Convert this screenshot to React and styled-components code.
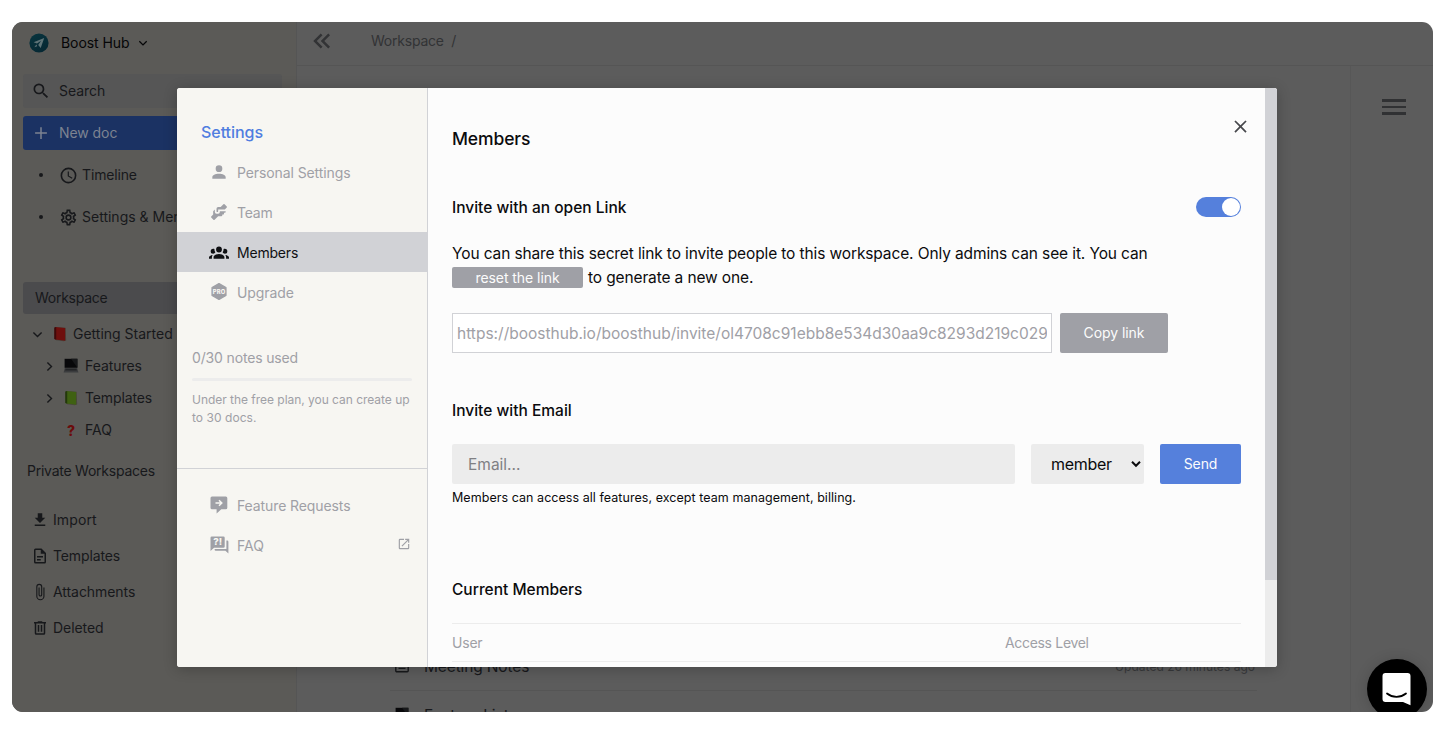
import React from 'react';
import styled, { createGlobalStyle } from 'styled-components';

const GlobalStyle = createGlobalStyle`
  * { box-sizing: border-box; }
  body { margin: 0; background: #fff; font-family: Inter, "Liberation Sans", sans-serif; }
  button, input { font-family: inherit; margin: 0; }
`;

const Page = styled.div`
  height: 734px;
  padding: 22px 12px;
`;

const Frame = styled.div`
  position: relative;
  display: flex;
  width: 1421px;
  height: 690px;
  border-radius: 11px;
  overflow: hidden;
  background: #5c5c5c;
`;

const Text = styled.span`
  padding-bottom: ${(p) => (p.$flat ? 0 : 2)}px;
  font-size: ${(p) => p.$size || 14}px;
  font-weight: ${(p) => p.$weight || 400};
  letter-spacing: ${(p) => (p.$track === undefined ? -0.06 : p.$track)}px;
  color: ${(p) => p.$color || 'inherit'};
  white-space: nowrap;
`;

const Svg = styled.svg`
  display: block;
  flex: none;
  fill: currentColor;
`;

const paths = {
  account: 'M12,4A4,4 0 0,1 16,8A4,4 0 0,1 12,12A4,4 0 0,1 8,8A4,4 0 0,1 12,4M12,14C16.42,14 20,15.79 20,18V20H4V18C4,15.79 7.58,14 12,14Z',
  handshake: 'M11 6H14L17.29 2.7A1 1 0 0 1 18.71 2.7L21.29 5.29A1 1 0 0 1 21.29 6.7L19 9H11V11A1 1 0 0 1 10 12A1 1 0 0 1 9 11V8A2 2 0 0 1 11 6M5 11V15L2.71 17.29A1 1 0 0 0 2.71 18.71L5.29 21.29A1 1 0 0 0 6.71 21.29L11 17H15A1 1 0 0 0 16 16V15H17A1 1 0 0 0 18 14V13H19A1 1 0 0 0 20 12V11H13V12A2 2 0 0 1 11 14H9A2 2 0 0 1 7 12V9Z',
  group: 'M12,5.5A3.5,3.5 0 0,1 15.5,9A3.5,3.5 0 0,1 12,12.5A3.5,3.5 0 0,1 8.5,9A3.5,3.5 0 0,1 12,5.5M5,8C5.56,8 6.08,8.15 6.53,8.42C6.38,9.85 6.8,11.27 7.66,12.38C7.16,13.34 6.16,14 5,14A3,3 0 0,1 2,11A3,3 0 0,1 5,8M19,8A3,3 0 0,1 22,11A3,3 0 0,1 19,14C17.84,14 16.84,13.34 16.34,12.38C17.2,11.27 17.62,9.85 17.47,8.42C17.92,8.15 18.44,8 19,8M5.5,18.25C5.5,16.18 8.41,14.5 12,14.5C15.59,14.5 18.5,16.18 18.5,18.25V20H5.5V18.25M0,20V18.5C0,17.11 1.89,15.94 4.45,15.6C3.86,16.28 3.5,17.22 3.5,18.25V20H0M24,20H20.5V18.25C20.5,17.22 20.14,16.28 19.55,15.6C22.11,15.94 24,17.11 24,18.5V20Z',
  open: 'M14,3V5H17.59L7.76,14.83L9.17,16.24L19,6.41V10H21V3M19,19H5V5H12V3H5A2,2 0 0,0 3,5V19A2,2 0 0,0 5,21H19A2,2 0 0,0 21,19V12H19V19Z',
  download: 'M5,20H19V18H5M19,9H15V3H9V9H5L12,16L19,9Z',
  magnify: 'M9.5,3A6.5,6.5 0 0,1 16,9.5C16,11.11 15.41,12.59 14.44,13.73L14.71,14H15.5L20.5,19L19,20.5L14,15.5V14.71L13.73,14.44C12.59,15.41 11.11,16 9.5,16A6.5,6.5 0 0,1 3,9.5A6.5,6.5 0 0,1 9.5,3M9.5,5C7,5 5,7 5,9.5C5,12 7,14 9.5,14C12,14 14,12 14,9.5C14,7 12,5 9.5,5Z',
  file: 'M6,2A2,2 0 0,0 4,4V20A2,2 0 0,0 6,22H18A2,2 0 0,0 20,20V8L14,2H6M6,4H13V9H18V20H6V4M8,12V14H16V12H8M8,16V18H13V16H8Z',
  trash: 'M9,3V4H4V6H5V19A2,2 0 0,0 7,21H17A2,2 0 0,0 19,19V6H20V4H15V3H9M7,6H17V19H7V6M9,8V17H11V8H9M13,8V17H15V8H13Z',
  paperclip: 'M16.5,6V17.5A4,4 0 0,1 12.5,21.5A4,4 0 0,1 8.5,17.5V5A2.5,2.5 0 0,1 11,2.5A2.5,2.5 0 0,1 13.5,5V15.5A1,1 0 0,1 12.5,16.5A1,1 0 0,1 11.5,15.5V6H10V15.5A2.5,2.5 0 0,0 12.5,18A2.5,2.5 0 0,0 15,15.5V5A4,4 0 0,0 11,1A4,4 0 0,0 7,5V17.5A5.5,5.5 0 0,0 12.5,23A5.5,5.5 0 0,0 18,17.5V6H16.5Z',
  clock: 'M12,20A8,8 0 0,0 20,12A8,8 0 0,0 12,4A8,8 0 0,0 4,12A8,8 0 0,0 12,20M12,2A10,10 0 0,1 22,12A10,10 0 0,1 12,22C6.47,22 2,17.5 2,12A10,10 0 0,1 12,2M12.5,7V12.25L17,14.92L16.25,16.15L11,13V7H12.5Z',
  cog: 'M12,8A4,4 0 0,1 16,12A4,4 0 0,1 12,16A4,4 0 0,1 8,12A4,4 0 0,1 12,8M12,10A2,2 0 0,0 10,12A2,2 0 0,0 12,14A2,2 0 0,0 14,12A2,2 0 0,0 12,10M10,22C9.75,22 9.54,21.82 9.5,21.58L9.13,18.93C8.5,18.68 7.96,18.34 7.44,17.94L4.95,18.95C4.73,19.03 4.46,18.95 4.34,18.73L2.34,15.27C2.21,15.05 2.27,14.78 2.46,14.63L4.57,12.97L4.5,12L4.57,11L2.46,9.37C2.27,9.22 2.21,8.95 2.34,8.73L4.34,5.27C4.46,5.05 4.73,4.96 4.95,5.05L7.44,6.05C7.96,5.66 8.5,5.32 9.13,5.07L9.5,2.42C9.54,2.18 9.75,2 10,2H14C14.25,2 14.46,2.18 14.5,2.42L14.87,5.07C15.5,5.32 16.04,5.66 16.56,6.05L19.05,5.05C19.27,4.96 19.54,5.05 19.66,5.27L21.66,8.73C21.79,8.95 21.73,9.22 21.54,9.37L19.43,11L19.5,12L19.43,13L21.54,14.63C21.73,14.78 21.79,15.05 21.66,15.27L19.66,18.73C19.54,18.95 19.27,19.04 19.05,18.95L16.56,17.95C16.04,18.34 15.5,18.68 14.87,18.93L14.5,21.58C14.46,21.82 14.25,22 14,22H10M11.25,4L10.88,6.61C9.68,6.86 8.62,7.5 7.85,8.39L5.44,7.35L4.69,8.65L6.8,10.2C6.4,11.37 6.4,12.64 6.8,13.8L4.68,15.36L5.43,16.66L7.86,15.62C8.63,16.5 9.68,17.14 10.87,17.38L11.24,20H12.76L13.13,17.39C14.32,17.14 15.37,16.5 16.14,15.62L18.57,16.66L19.32,15.36L17.2,13.81C17.6,12.64 17.6,11.37 17.2,10.2L19.31,8.65L18.56,7.35L16.15,8.39C15.38,7.5 14.32,6.86 13.12,6.62L12.75,4H11.25Z',
  doubleLeft: 'M18.41,7.41L17,6L11,12L17,18L18.41,16.59L13.83,12L18.41,7.41M12.41,7.41L11,6L5,12L11,18L12.41,16.59L7.83,12L12.41,7.41Z',
  close: 'M19,6.41L17.59,5L12,10.59L6.41,5L5,6.41L10.59,12L5,17.59L6.41,19L12,13.41L17.59,19L19,17.59L13.41,12L19,6.41Z',
};

const Icon = ({ name, size = 18 }) => (
  <Svg width={size} height={size} viewBox="0 0 24 24"><path d={paths[name]} /></Svg>
);

const StrokeIcon = ({ d, width = 1.4, size = 17 }) => (
  <Svg width={size} height={size} viewBox={`0 0 ${size} ${size}`}>
    <path d={d} fill="none" stroke="currentColor" strokeWidth={width} />
  </Svg>
);

const strokes = {
  down: 'M4.400 6.400 8.500 10.500l4.100-4.100',
  right: 'M6.400 4.400 10.500 8.500l-4.100 4.100',
  smallDown: 'M4.300 6.200 8 9.900l3.700-3.700',
  plus: 'M10 4.200v11.800M4.100 10.100h11.800',
};

const Logo = () => (
  <Svg width="20" height="20" viewBox="0 0 20 20">
    <defs>
      <linearGradient id="logo" x1="0" y1="0" x2="0.6" y2="1">
        <stop offset="0" stopColor="#08353f" />
        <stop offset="1" stopColor="#062833" />
      </linearGradient>
    </defs>
    <circle cx="10" cy="10" r="9.6" fill="url(#logo)" />
    <path d="M15.200 5 4.600 9.300l3.400 1.300 4.100-2.800-2.900 4.300 2.500 3z" fill="#5e7377" />
    <path d="M7.400 11.400 5.300 14.200l2.900-1z" fill="#5e7377" />
  </Svg>
);

const Book = ({ cover, edge }) => (
  <Svg width="15" height="16" viewBox="0 0 15 16">
    <path d="M3 1l9.600.7.6 12.700-2.400.8L3 14.200z" fill="#4a463f" />
    <path d="M2.200 1l10 .9v12.900L2.200 13.600z" fill={cover} />
    <path d="M1.200 1.400 3.200 1v12.800l-2-.9z" fill={edge} />
  </Svg>
);

const Laptop = () => (
  <Svg width="16" height="16" viewBox="0 0 16 16">
    <path d="M1.600.8h12.800v9H1.600z" fill="#08080a" />
    <path d="M8 .8h6.400v9z" fill="#17181a" />
    <path d="M1.800 10h12.400l1.200 4.600H.6z" fill="#3b3c3e" />
    <path d="M2.600 10.800h10.800l.5 1.700H2.100z" fill="#242527" />
  </Svg>
);

const DocIcon = () => (
  <Svg width="16" height="18" viewBox="0 0 16 18">
    <path d="M1.800 2.700a1 1 0 0 1 1-1h10.400a1 1 0 0 1 1 1v11a1 1 0 0 1-1 1H2.800a1 1 0 0 1-1-1zM4.500 5.500h7M4.500 8.400h7M4.500 11.400h7" fill="none" stroke="currentColor" strokeWidth="1.400" />
  </Svg>
);

const ProIcon = () => (
  <Svg width="18" height="19" viewBox="0 0 18 19">
    <path d="M9 1.600l6.900 3.900v8L9 17.400l-6.900-3.900v-8z" strokeLinejoin="round" stroke="currentColor" strokeWidth="1.400" />
    <text x="9" y="11.600" fontSize="5.800" fontWeight="800" textAnchor="middle" textLength="12.600" fill="#f7f6f2">PRO</text>
  </Svg>
);

const FeatureIcon = () => (
  <Svg width="18" height="18" viewBox="0 0 18 18">
    <path d="M2 .6h13.800a1.500 1.500 0 0 1 1.500 1.500v9.700a1.500 1.500 0 0 1-1.500 1.500h-4.500L6.600 17.400v-4.100H2A1.500 1.500 0 0 1 .5 11.800V2.100A1.500 1.500 0 0 1 2 .6z" />
    <path d="M5.500 7h6M9 4.300 11.800 7 9 9.700" fill="none" stroke="#f7f6f2" strokeWidth="1.500" />
  </Svg>
);

const FaqIcon = () => (
  <Svg width="19" height="18" viewBox="0 0 19 18">
    <path d="M1.800.5h11.600a1.300 1.300 0 0 1 1.300 1.300v8.600a1.300 1.300 0 0 1-1.300 1.300H4.100L.5 15V1.800A1.300 1.300 0 0 1 1.800.5z" />
    <path d="M16.400 4.500h.8a1.200 1.200 0 0 1 1.200 1.200V17.500l-3-2.700H5.800a1.200 1.200 0 0 1-1.200-1.200v-.5h11.800z" />
    <text x="7.700" y="9.300" fontSize="9.500" fontWeight="800" textAnchor="middle" fill="#f7f6f2">?!</text>
  </Svg>
);

const Sidebar = styled.aside`
  display: flex;
  flex-direction: column;
  width: 285px;
  border-right: 1px solid #555555;
  background: #5b5a57;
  color: #17181b;
`;

const SpaceHeader = styled.div`
  display: flex;
  align-items: center;
  height: 42px;
  padding-left: 17px;
  margin-bottom: 10px;
  color: #060607;
`;

const SpaceName = styled.div`
  display: flex;
  align-items: center;
  gap: 5px;
  margin-left: 12px;
`;

const SideBox = styled.div`
  display: flex;
  align-items: center;
  gap: 8px;
  height: ${(p) => p.$height || 34}px;
  width: 259px;
  margin: ${(p) => p.$before || 0}px 0 ${(p) => p.$after}px 11px;
  padding-left: ${(p) => p.$pad || 8}px;
  border-radius: 3px;
  background: ${(p) => p.$bg};
  color: ${(p) => p.$color || '#17181b'};
`;

const NavRow = styled.div`
  display: flex;
  align-items: center;
  gap: 4px;
  height: 42px;
  padding-left: 27px;
`;

const Dot = styled.span`
  width: 4px;
  height: 4px;
  border-radius: 50%;
  background: #17181b;
  margin-right: 12px;
`;

const Tree = styled.div`
  margin-bottom: 9px;
`;

const TreeRow = styled.div`
  display: flex;
  align-items: center;
  height: 32px;
  padding-left: ${(p) => p.$indent}px;
`;

const TreeIcon = styled.span`
  display: flex;
  justify-content: center;
  width: 16px;
  margin: 0 ${(p) => p.$after}px 0 ${(p) => p.$before}px;
`;

const QuestionMark = styled.span`
  font-size: 14px;
  font-weight: 800;
  color: #6b0c0c;
`;

const SectionTitle = styled.div`
  display: flex;
  align-items: center;
  height: 32px;
  padding-left: 15px;
  margin-bottom: 15px;
`;

const FooterRow = styled.div`
  display: flex;
  align-items: center;
  gap: 4px;
  height: 36px;
  padding-left: 19px;
`;

const Main = styled.main`
  display: flex;
  flex-direction: column;
  flex: 1;
`;

const Topbar = styled.header`
  display: flex;
  align-items: center;
  gap: 34px;
  height: 44px;
  padding: 0 0 5px 10px;
  border-bottom: 1px solid #555555;
  color: #323335;
`;

const Body = styled.div`
  display: flex;
  flex: 1;
  min-height: 0;
`;

const DocList = styled.div`
  flex: 1;
  padding: 576px 93px 0 93px;
`;

const DocRow = styled.div`
  display: flex;
  align-items: center;
  height: 49px;
  padding: 0 2px 0 4px;
  border-bottom: 1px solid #555555;
  color: #17181b;
`;

const DocName = styled.div`
  display: flex;
  flex: 1;
  margin-left: 14px;
`;

const Rail = styled.div`
  width: 83px;
  padding: 33px 0 0 31px;
  border-left: 1px solid #575757;
`;

const MenuBars = styled.div`
  display: flex;
  flex-direction: column;
  gap: 4px;
  width: 24px;

  i { height: 2.7px; background: #303133; }
`;

const Modal = styled.section`
  position: absolute;
  top: 66px;
  left: 165px;
  display: flex;
  width: 1100px;
  height: 579px;
  border-radius: 3px;
  overflow: hidden;
  background: #fcfcfc;
`;

const ModalShadow = styled.div`
  position: absolute;
  top: 66px;
  left: 165px;
  width: 1100px;
  height: 579px;
  border-radius: 3px;
  box-shadow: 0 2px 14px rgba(0, 0, 0, 0.24);
`;

const SettingsNav = styled.nav`
  width: 251px;
  border-right: 1px solid #d1d2d6;
  background: #f7f6f2;
  color: #9fa0a6;
`;

const NavTitle = styled.h2`
  display: flex;
  align-items: center;
  height: 64px;
  margin: 0;
  padding: 25px 0 0 24px;
  color: #4f7de0;
`;

const NavItem = styled.div`
  display: flex;
  align-items: center;
  height: 40px;
  padding: 2px 16px 0 31px;
  background: ${(p) => (p.$active ? '#d1d2d6' : 'transparent')};
  color: ${(p) => (p.$active ? '#0f1013' : 'inherit')};
`;

const NavIcon = styled.span`
  display: flex;
  justify-content: center;
  width: 22px;
  margin: -3px 7px 0 0;
`;

const TrailingIcon = styled.span`
  margin: -4px 0 0 auto;
`;

const Usage = styled.div`
  height: 157px;
  padding: 33px 15px 0;
  border-bottom: 1px solid #d1d2d6;
`;

const UsageCount = styled.div`
  line-height: 24px;
`;

const UsageBar = styled.div`
  height: 3px;
  margin: 8px 0 10px;
  border-radius: 2px;
  background: #ececec;
`;

const UsageNote = styled.div`
  line-height: 18px;

  span { display: block; }
`;

const LinkItems = styled.div`
  padding-top: 16px;
`;

const Content = styled.div`
  flex: 1;
  padding: 40px 24px 0;
  color: #0b0b0d;
`;

const CloseButton = styled.button`
  position: absolute;
  top: 28px;
  right: 26px;
  width: 21px;
  height: 21px;
  padding: 0;
  border: 0;
  background: none;
  color: #47484c;
`;

const Heading = styled.h3`
  display: flex;
  align-items: center;
  justify-content: space-between;
  height: ${(p) => p.$height || 24}px;
  margin: ${(p) => p.$before || 0}px 0 0;
`;

const Toggle = styled.span`
  display: flex;
  align-items: center;
  justify-content: flex-end;
  width: 45px;
  height: 20px;
  padding: 0 1px;
  border-radius: 10px;
  background: #5580dc;

  &::after {
    content: '';
    width: 18px;
    height: 18px;
    border-radius: 50%;
    background: #fff;
  }
`;

const Paragraph = styled.p`
  margin: 23px 0;
`;

const Line = styled.span`
  display: flex;
  align-items: center;
  gap: 5px;
  height: 24px;
`;

const Button = styled.button`
  display: flex;
  align-items: center;
  justify-content: center;
  width: ${(p) => p.$width}px;
  height: ${(p) => p.$height || 40}px;
  padding: 0;
  border: 0;
  border-radius: 2px;
  background: ${(p) => (p.$primary ? '#5580dc' : '#9fa0a6')};
  color: #fcfcfc;
`;

const ResetButton = styled(Button)`
  margin-top: -1px;
`;

const FormRow = styled.div`
  display: flex;
  gap: ${(p) => p.$gap}px;
  margin-top: ${(p) => p.$before || 0}px;
`;

const LinkInput = styled.input`
  width: 600px;
  height: 40px;
  padding: 0 4px;
  border: 1px solid #d1d2d6;
  border-radius: 0;
  background: #fff;
  color: #9fa0a6;
  font-size: 15.5px;
`;

const EmailInput = styled.input`
  flex: 1;
  height: 40px;
  padding: 0 16px;
  border: 0;
  border-radius: 2px;
  background: #ececec;
  font-size: 15.5px;

  &::placeholder { color: #808084; opacity: 1; }
`;

const RoleSelect = styled.div`
  display: flex;
  align-items: center;
  justify-content: space-between;
  width: 113px;
  height: 40px;
  padding: 0 2px 0 20px;
  border-radius: 2px;
  background: #ececec;
`;

const Help = styled.div`
  height: 26px;
  line-height: 25px;
`;

const TableHead = styled.div`
  display: grid;
  grid-template-columns: 553px 1fr;
  align-items: center;
  height: 39px;
  margin-top: 22px;
  border: solid #ececec;
  border-width: 1px 0;
  color: #9fa0a6;
`;

const Scrollbar = styled.div`
  width: 12px;
  background: #ececec;
`;

const Thumb = styled.div`
  height: 492px;
  background: #d1d2d6;
`;

const Chat = styled.div`
  position: absolute;
  top: 637px;
  left: 1355px;
  display: flex;
  align-items: center;
  justify-content: center;
  width: 60px;
  height: 60px;
  border-radius: 50%;
  background: #000;
  box-shadow: 0 1px 14px rgba(0, 0, 0, 0.16);
`;

const navItems = [
  { label: 'Personal Settings', icon: <Icon name="account" size={20} />, track: -0.1 },
  { label: 'Team', icon: <Icon name="handshake" size={20} />, track: -0.2 },
  { label: 'Members', icon: <Icon name="group" size={20} />, track: -0.2, active: true },
  { label: 'Upgrade', icon: <ProIcon />, track: -0.1 },
];

const footerItems = [
  { label: 'Import', icon: 'download', track: 0.1 },
  { label: 'Templates', icon: 'file', track: -0.13 },
  { label: 'Attachments', icon: 'paperclip' },
  { label: 'Deleted', icon: 'trash' },
];

export default function App() {
  return (
    <>
      <GlobalStyle />
      <Page>
        <Frame>
          <Sidebar>
            <SpaceHeader>
              <Logo />
              <SpaceName>
                <Text>Boost Hub</Text>
                <StrokeIcon d={strokes.smallDown} size={16} width={1.3} />
              </SpaceName>
            </SpaceHeader>
            <SideBox $bg="#565656" $after={8}><Icon name="magnify" size={20} /><Text>Search</Text></SideBox>
            <SideBox $bg="#1b3263" $color="#7d8391" $after={4}>
              <StrokeIcon d={strokes.plus} size={20} width={1.5} /><Text>New doc</Text>
            </SideBox>
            <NavRow><Dot /><Icon name="clock" size={19} /><Text $track={-0.15}>Timeline</Text></NavRow>
            <NavRow><Dot /><Icon name="cog" size={19} /><Text $track={0}>Settings &amp; Members</Text></NavRow>
            <SideBox $bg="#4b4b4d" $height={32} $pad={12} $before={44} $after={4}>
              <Text $track={-0.27}>Workspace</Text>
            </SideBox>
            <Tree>
              <TreeRow $indent={17}>
                <StrokeIcon d={strokes.down} />
                <TreeIcon $before={6} $after={5}><Book cover="#6e0f0d" edge="#3f0808" /></TreeIcon>
                <Text $track={0}>Getting Started</Text>
              </TreeRow>
              <TreeRow $indent={29}>
                <StrokeIcon d={strokes.right} />
                <TreeIcon $before={5} $after={6}><Laptop /></TreeIcon>
                <Text>Features</Text>
              </TreeRow>
              <TreeRow $indent={29}>
                <StrokeIcon d={strokes.right} />
                <TreeIcon $before={5} $after={6}><Book cover="#3f6112" edge="#23380b" /></TreeIcon>
                <Text $track={-0.13}>Templates</Text>
              </TreeRow>
              <TreeRow $indent={46}>
                <TreeIcon $before={5} $after={6}><QuestionMark>?</QuestionMark></TreeIcon>
                <Text $track={0.1}>FAQ</Text>
              </TreeRow>
            </Tree>
            <SectionTitle><Text $track={-0.24}>Private Workspaces</Text></SectionTitle>
            {footerItems.map((item) => (
              <FooterRow key={item.label}>
                <Icon name={item.icon} />
                <Text $track={item.track}>{item.label}</Text>
              </FooterRow>
            ))}
          </Sidebar>

          <Main>
            <Topbar>
              <Icon name="doubleLeft" size={30} />
              <Text $track={-0.22}>Workspace&nbsp; /</Text>
            </Topbar>
            <Body>
              <DocList>
                <DocRow>
                  <DocIcon />
                  <DocName><Text $flat $size={15.5} $track={-0.14}>Meeting Notes</Text></DocName>
                  <Text $flat $size={12} $track={0.02} $color="#38393b">Updated 26 minutes ago</Text>
                </DocRow>
                <DocRow>
                  <Laptop />
                  <DocName><Text $flat $size={15.5}>Feature List</Text></DocName>
                </DocRow>
              </DocList>
              <Rail><MenuBars><i /><i /><i /></MenuBars></Rail>
            </Body>
          </Main>

          <ModalShadow />
          <Modal>
            <SettingsNav>
              <NavTitle><Text $size={16} $weight={500} $track={-0.05}>Settings</Text></NavTitle>
              {navItems.map((item) => (
                <NavItem key={item.label} $active={item.active}>
                  <NavIcon>{item.icon}</NavIcon>
                  <Text $track={item.track}>{item.label}</Text>
                </NavItem>
              ))}
              <Usage>
                <UsageCount><Text $track={-0.15}>0/30 notes used</Text></UsageCount>
                <UsageBar />
                <UsageNote>
                  <Text $flat $size={12} $track={-0.03}>Under the free plan, you can create up</Text>
                  <Text $flat $size={12} $track={0.05}>to 30 docs.</Text>
                </UsageNote>
              </Usage>
              <LinkItems>
                <NavItem><NavIcon><FeatureIcon /></NavIcon><Text $track={-0.1}>Feature Requests</Text></NavItem>
                <NavItem>
                  <NavIcon><FaqIcon /></NavIcon>
                  <Text $track={0.1}>FAQ</Text>
                  <TrailingIcon><Icon name="open" size={14} /></TrailingIcon>
                </NavItem>
              </LinkItems>
            </SettingsNav>

            <Content>
              <Heading $height={22}><Text $size={17.5} $weight={500} $track={-0.12}>Members</Text></Heading>
              <Heading $before={45}>
                <Text $flat $size={15.5} $weight={500} $track={0}>Invite with an open Link</Text>
                <Toggle />
              </Heading>
              <Paragraph>
                <Line>
                  <Text $size={15.5} $track={-0.12}>
                    You can share this secret link to invite people to this workspace. Only admins can see it. You can
                  </Text>
                </Line>
                <Line>
                  <ResetButton $width={131} $height={21}><Text $flat>reset the link</Text></ResetButton>
                  <Text $size={15.5} $track={-0.13}>to generate a new one.</Text>
                </Line>
              </Paragraph>
              <FormRow $gap={8}>
                <LinkInput readOnly value="https://boosthub.io/boosthub/invite/ol4708c91ebb8e534d30aa9c8293d219c0290" />
                <Button $width={108}><Text>Copy link</Text></Button>
              </FormRow>

              <Heading $before={45}><Text $flat $size={15.5} $weight={500} $track={0}>Invite with Email</Text></Heading>
              <FormRow $gap={16} $before={22}>
                <EmailInput placeholder="Email..." />
                <RoleSelect>
                  <Text $flat $size={16} $track={-0.3}>member</Text>
                  <Svg width="12" height="10" viewBox="0 0 12 10">
                    <path d="M2 2.800 6 6.800l4-4" fill="none" stroke="#0b0b0d" strokeWidth="2" />
                  </Svg>
                </RoleSelect>
                <Button $primary $width={81}><Text>Send</Text></Button>
              </FormRow>
              <Help>
                <Text $size={12.5} $track={0.05}>Members can access all features, except team management, billing.</Text>
              </Help>

              <Heading $before={67}><Text $flat $size={15.5} $weight={500} $track={0}>Current Members</Text></Heading>
              <TableHead>
                <Text $flat $track={-0.2}>User</Text>
                <Text $flat $track={-0.32}>Access Level</Text>
              </TableHead>
            </Content>
            <CloseButton><Icon name="close" size={21} /></CloseButton>
            <Scrollbar><Thumb /></Scrollbar>
          </Modal>

          <Chat>
            <Svg width="30" height="34" viewBox="0 0 30 34">
              <path d="M3.500 1h22a3 3 0 0 1 3 3v29.200l-7.500-3.200H3.500a3 3 0 0 1-3-3V4a3 3 0 0 1 3-3z" fill="#fff" />
              <path d="M5 21.500c5.500 4.400 13.500 4.400 19 0" fill="none" stroke="#000" strokeWidth="1.800" strokeLinecap="round" />
            </Svg>
          </Chat>
        </Frame>
      </Page>
    </>
  );
}
